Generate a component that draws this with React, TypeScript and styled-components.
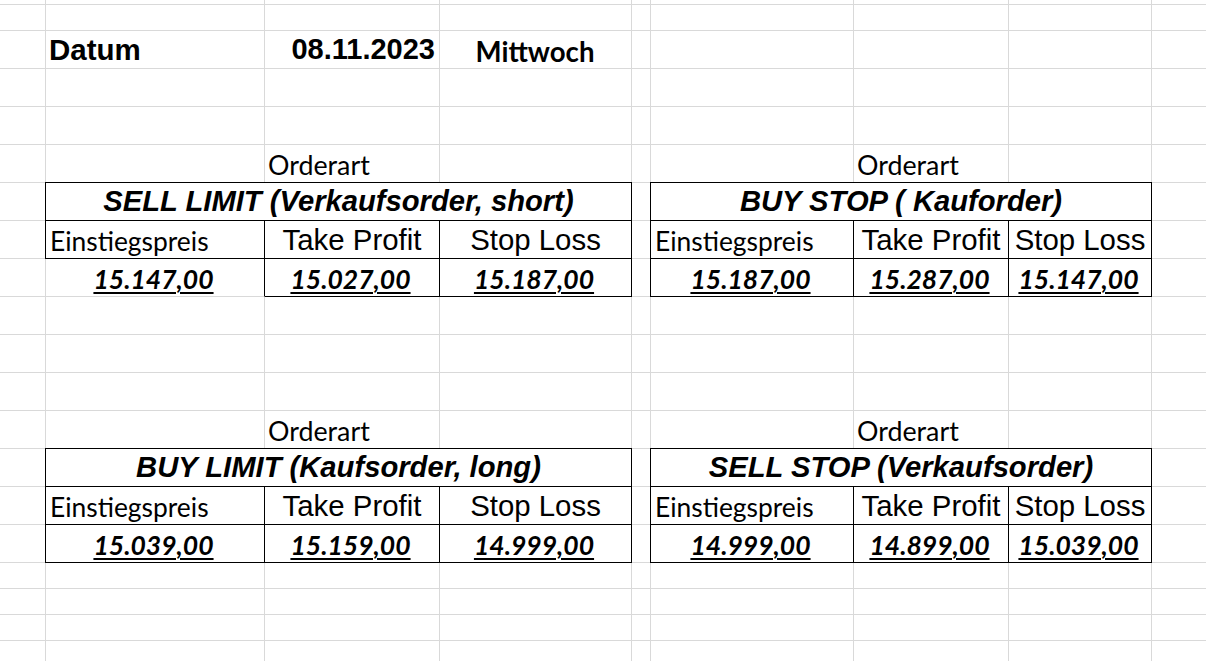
import React from "react";
import styled, { createGlobalStyle } from "styled-components";

const GlobalStyle = createGlobalStyle`
  html, body { margin: 0; padding: 0; background: #ffffff; }
  body { width: 1206px; height: 661px; overflow: hidden; }
`;

const GRID = "#d9d9d9";
const ARIAL = `"Liberation Sans", Arial, sans-serif`;
const CALIBRI = `Lato, "Open Sans", sans-serif`;

const COLS = [45, 219, 175, 192, 19, 203, 155, 143, 55];
const ROWS = [4, 26, ...Array(14).fill(38), 26, 26, 26, 26];

const Sheet = styled.div`
  display: grid;
  grid-template-columns: ${COLS.map((c) => `${c}px`).join(" ")};
  grid-template-rows: ${ROWS.map((r) => `${r}px`).join(" ")};
  width: 1206px;
  height: 661px;
  overflow: hidden;
  background: #ffffff;
  color: #000000;
`;

const GridCell = styled.div<{ $row: number; $col: number }>`
  grid-row: ${(p) => p.$row};
  grid-column: ${(p) => p.$col};
  box-sizing: border-box;
  border-left: ${(p) => (p.$col > 1 ? `1px solid ${GRID}` : "none")};
  border-top: ${(p) => (p.$row > 1 ? `1px solid ${GRID}` : "none")};
`;

const SheetText = styled.div<{ $row: number; $col: number }>`
  grid-row: ${(p) => p.$row};
  grid-column: ${(p) => p.$col};
  box-sizing: border-box;
  padding-top: 1px;
  line-height: 37px;
  white-space: nowrap;
  z-index: 1;
`;

const DateLabel = styled(SheetText)`
  font-family: ${ARIAL};
  font-weight: 700;
  font-size: 29.5px;
  padding-left: 4px;
`;

const DateValue = styled(SheetText)`
  font-family: ${ARIAL};
  font-weight: 700;
  font-size: 29px;
  text-align: right;
  padding-right: 4px;
`;

const Weekday = styled(SheetText)`
  font-family: ${CALIBRI};
  font-weight: 700;
  font-size: 27.6px;
  text-align: center;
  padding-top: 3px;
`;

const Caption = styled(SheetText)`
  font-family: ${CALIBRI};
  font-weight: 400;
  font-size: 26.8px;
  padding-left: 4px;
  padding-top: 3px;
`;

const OrderTable = styled.div<{ $row: number; $col: number; $cols: string }>`
  grid-row: ${(p) => p.$row} / span 3;
  grid-column: ${(p) => p.$col} / span 3;
  align-self: start;
  justify-self: start;
  display: grid;
  grid-template-columns: ${(p) => p.$cols};
  grid-template-rows: 39px 38px 38px;
  background: #ffffff;
  z-index: 2;
`;

const BaseCell = styled.div<{ $first?: boolean; $faint?: boolean }>`
  box-sizing: border-box;
  border-right: 1px solid #000;
  border-bottom: 1px solid ${(p) => (p.$faint ? GRID : "#000")};
  border-left: ${(p) => (p.$first ? `1px solid ${p.$faint ? GRID : "#000"}` : "none")};
  line-height: 37px;
  white-space: nowrap;
  overflow: visible;
`;

const HeaderCell = styled(BaseCell)`
  grid-column: 1 / span 3;
  border-top: 1px solid #000;
  border-left: 1px solid #000;
  font-family: ${ARIAL};
  font-weight: 700;
  font-style: italic;
  font-size: 29.2px;
  text-align: center;
`;

const EntryLabel = styled(BaseCell)`
  font-family: ${CALIBRI};
  font-size: 26.4px;
  padding-left: 4px;
  padding-top: 2px;
`;

const MetricLabel = styled(BaseCell)`
  font-family: ${ARIAL};
  font-size: 29.4px;
  text-align: center;
`;

const ValueCell = styled(BaseCell)`
  font-family: ${CALIBRI};
  font-weight: 700;
  font-style: italic;
  font-size: 26.5px;
  text-align: center;
  padding-top: 2px;
  padding-right: 3px;
`;

const Amount = styled.span`
  text-decoration: underline;
  text-decoration-thickness: 2px;
  text-underline-offset: 3px;
`;

type Order = {
  title: string;
  entry: string;
  tp: string;
  sl: string;
  row: number;
  col: number;
  cols: string;
  faintEntry?: boolean;
};

const LEFT = "220px 175px 192px";
const RIGHT = "204px 155px 143px";

const ORDERS: Order[] = [
  { title: "SELL LIMIT (Verkaufsorder, short)", entry: "15.147,00", tp: "15.027,00", sl: "15.187,00", row: 7, col: 2, cols: LEFT, faintEntry: true },
  { title: "BUY STOP ( Kauforder)", entry: "15.187,00", tp: "15.287,00", sl: "15.147,00", row: 7, col: 6, cols: RIGHT },
  { title: "BUY LIMIT (Kaufsorder, long)", entry: "15.039,00", tp: "15.159,00", sl: "14.999,00", row: 14, col: 2, cols: LEFT },
  { title: "SELL STOP (Verkaufsorder)", entry: "14.999,00", tp: "14.899,00", sl: "15.039,00", row: 14, col: 6, cols: RIGHT },
];

export default function App() {
  const cells: React.ReactNode[] = [];
  ROWS.forEach((_, r) => {
    COLS.forEach((__, c) => {
      cells.push(<GridCell key={`${r}-${c}`} $row={r + 1} $col={c + 1} />);
    });
  });

  return (
    <>
      <GlobalStyle />
      <Sheet>
        {cells}
        <DateLabel $row={3} $col={2}>Datum</DateLabel>
        <DateValue $row={3} $col={3}>08.11.2023</DateValue>
        <Weekday $row={3} $col={4}>Mittwoch</Weekday>
        {ORDERS.map((o) => (
          <React.Fragment key={o.title}>
            <Caption $row={o.row - 1} $col={o.col + 1}>Orderart</Caption>
            <OrderTable $row={o.row} $col={o.col} $cols={o.cols}>
              <HeaderCell>{o.title}</HeaderCell>
              <EntryLabel $first>Einstiegspreis</EntryLabel>
              <MetricLabel>Take Profit</MetricLabel>
              <MetricLabel>Stop Loss</MetricLabel>
              <ValueCell $first $faint={o.faintEntry}><Amount>{o.entry}</Amount></ValueCell>
              <ValueCell><Amount>{o.tp}</Amount></ValueCell>
              <ValueCell><Amount>{o.sl}</Amount></ValueCell>
            </OrderTable>
          </React.Fragment>
        ))}
      </Sheet>
    </>
  );
}
